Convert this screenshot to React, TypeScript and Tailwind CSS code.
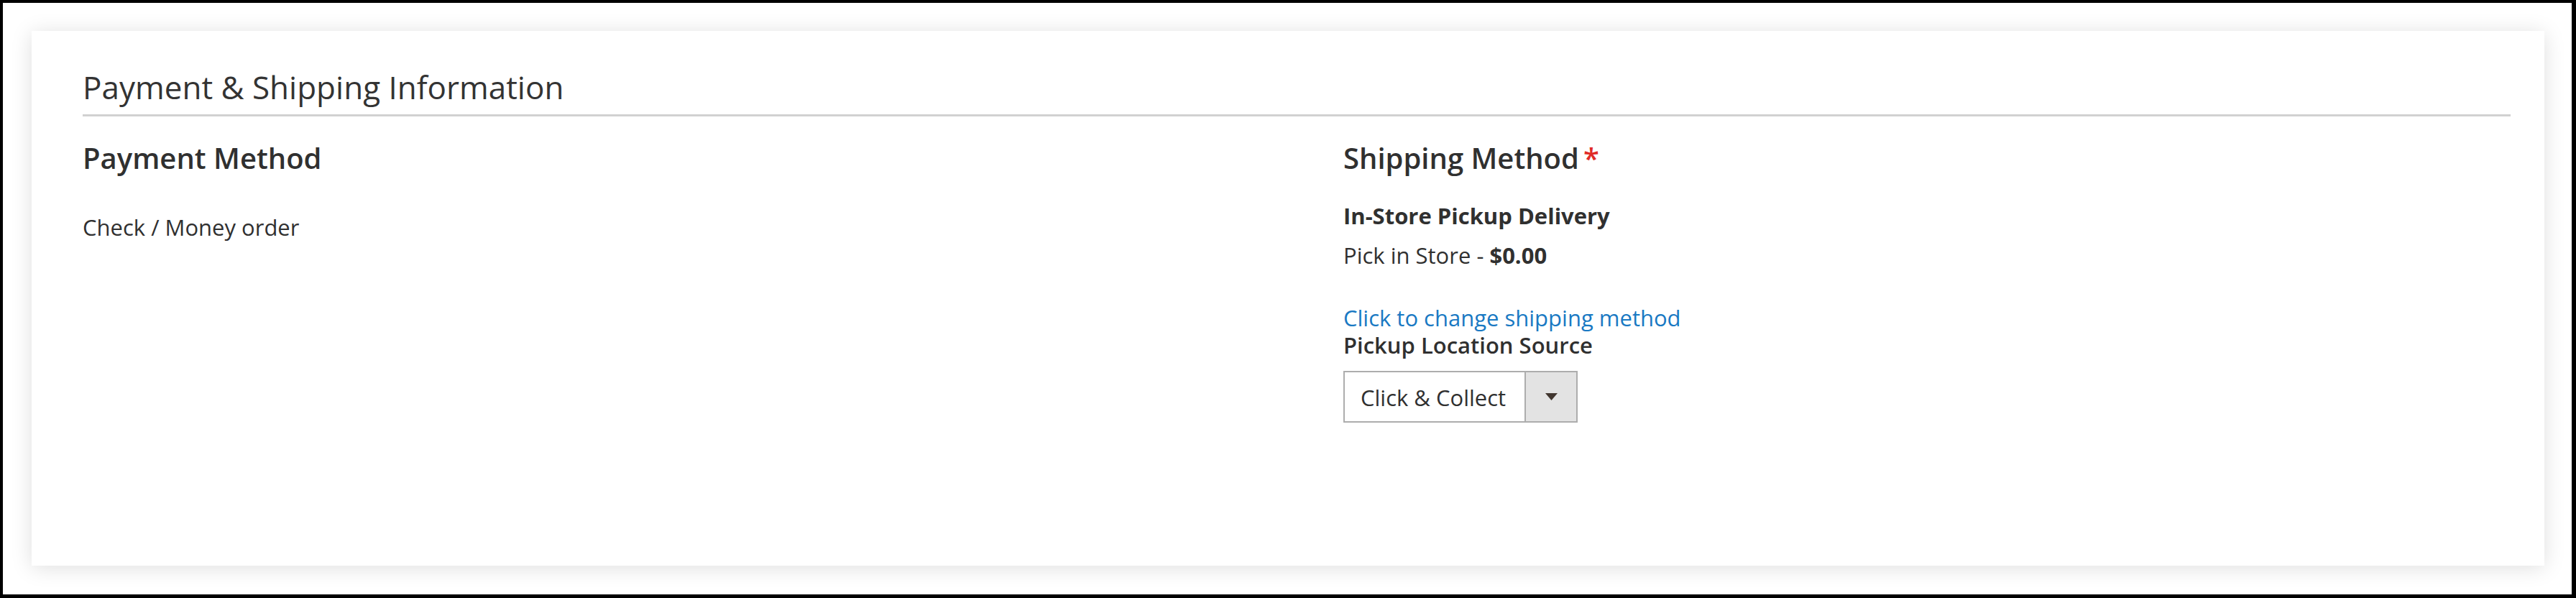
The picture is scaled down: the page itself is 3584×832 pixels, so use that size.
import React from 'react';

const SelectBox: React.FC<{ value: string }> = ({ value }) => (
  <div className="flex h-[72px] w-[326px] border-2 border-[#adadad] bg-white">
    <div className="flex-1 pl-[22px] pt-[16px] text-[31px] leading-[38px] text-[#303030]">{value}</div>
    <div className="flex w-[72px] items-center justify-center border-l-2 border-[#adadad] bg-[#e3e3e3]">
      <svg width="17" height="10" viewBox="0 0 17 10">
        <path d="M0 0 H17 L8.5 10 Z" fill="#41362f" />
      </svg>
    </div>
  </div>
);

const App: React.FC = () => {
  return (
    <div className="h-[832px] w-full border-t-4 border-l-4 border-r-[6px] border-b-[5px] border-black bg-white font-['Open_Sans',sans-serif] text-[#303030]">
      <div className="h-full pt-[39px] pl-[40px] pr-[38px] pb-[40px]">
        <div className="h-full bg-white pt-[52px] pl-[71px] pr-[47px] shadow-[0_3px_28px_rgba(0,0,0,0.13)]">
          {/* Section title */}
          <div className="border-b-[3px] border-[#d1d1d1] pb-[12px]">
            <h2 className="text-[44px] font-normal leading-[52px] text-[#333333]">Payment &amp; Shipping Information</h2>
          </div>

          <div className="grid grid-cols-2 pt-[34px]">
            {/* Payment */}
            <div>
              <h3 className="text-[40px] font-semibold leading-[48px] text-[#303030]">Payment Method</h3>
              <p className="mt-[53px] text-[31px] leading-[38px]">Check / Money order</p>
            </div>

            {/* Shipping */}
            <div className="pl-[65px]">
              <h3 className="text-[40px] font-semibold leading-[48px] text-[#303030]">
                Shipping Method<span className="ml-[6px] text-[#e02b27]">*</span>
              </h3>
              <p className="mt-[37px] text-[31px] font-bold leading-[38px]">In-Store Pickup Delivery</p>
              <p className="mt-[17px] text-[31px] leading-[38px]">
                Pick in Store - <span className="font-bold">$0.00</span>
              </p>
              <a href="#" className="mt-[49px] block w-fit text-[31px] leading-[38px] text-[#1979c3]">
                Click to change shipping method
              </a>
              <label className="block text-[31px] font-semibold leading-[38px]">Pickup Location Source</label>
              <div className="mt-[17px]">
                <SelectBox value="Click & Collect" />
              </div>
            </div>
          </div>
        </div>
      </div>
    </div>
  );
};

export default App;
